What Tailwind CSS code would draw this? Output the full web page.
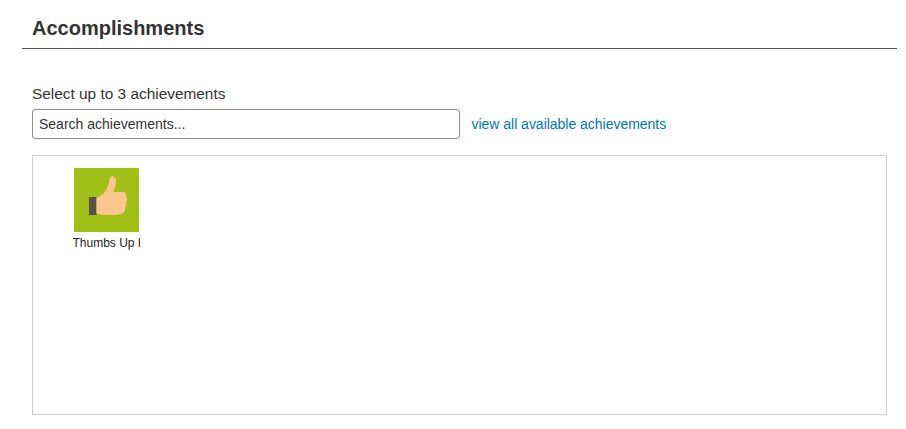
<!DOCTYPE html>
<html lang="en">
<head>
<meta charset="utf-8">
<title>Accomplishments</title>
<script src="https://cdn.jsdelivr.net/npm/@tailwindcss/browser@4"></script>
</head>
<body class="bg-white font-['Liberation_Sans',Arial,sans-serif] text-[#333333]">
<div class="w-[906px] h-[429px] overflow-hidden">
  <div class="ml-[22px] mr-[9px] h-[49px] border-b border-[#555555] pl-[10px] pt-[15px]">
    <h2 class="text-[20px] leading-[26px] font-bold text-[#333333]">Accomplishments</h2>
  </div>
  <div class="pl-[32px] pr-[19px]">
    <div class="mt-[36px] text-[15.4px] leading-[18px] text-[#333333]">Select up to 3 achievements</div>
    <div class="mt-[6px] flex items-center h-[30px]">
      <input type="text" placeholder="Search achievements..." class="w-[428px] h-[30px] border border-[#8f8f8f] rounded-[3px] px-[6px] text-[14px] text-[#333333] placeholder:text-[#333333] font-['Liberation_Sans',Arial,sans-serif]">
      <a href="#" class="ml-[11.5px] text-[14px] tracking-[-0.02px] leading-[18px] text-[#0079a8]">view all available achievements</a>
    </div>
    <div class="mt-[16px] w-[855px] h-[260px] border border-[#cccccc] pl-[39px] pt-[12px]">
      <div class="w-[68px]">
        <svg viewBox="0 0 65 64" class="block ml-[2px] w-[65px] h-[64px]" xmlns="http://www.w3.org/2000/svg" aria-hidden="true">
          <rect width="65" height="64" fill="#a0c015"/>
          <rect x="15" y="29" width="7.5" height="18" fill="#58514c"/>
          <path d="M22.5 30 C25 28.5 27.5 27.5 29.5 25.5 C32.5 22.5 34.5 18 35 13 C35.3 9.5 37.5 7.5 39.5 8.5 C41.8 9.5 42.5 12.5 42 15.5 C41.5 19 40 22 39.5 24 L49.5 24 C52 24 53 27 52 29 C53.3 30.5 53.3 33 52 34.5 C53 36.5 52.3 38.5 51 39.5 C51.5 42 50 45 47.5 46 C42 47.5 30 47.5 22.5 45.5 Z" fill="#fcc78f"/>
        </svg>
        <div class="mt-[4px] ml-[0.5px] w-[67.5px] overflow-hidden whitespace-nowrap text-[12px] leading-[14px] text-[#222222]">Thumbs Up I</div>
      </div>
    </div>
  </div>
</div>
</body>
</html>
